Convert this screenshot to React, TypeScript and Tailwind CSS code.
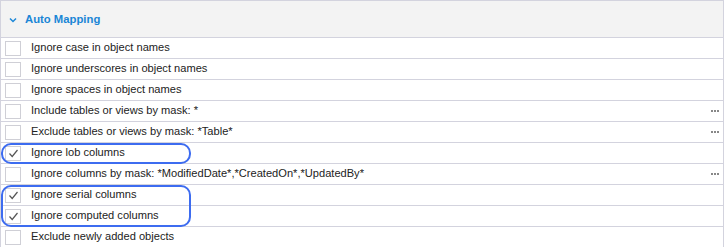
import React from "react";

type Row = { label: string; checked?: boolean; dots?: boolean };

const rows: Row[] = [
  { label: "Ignore case in object names" },
  { label: "Ignore underscores in object names" },
  { label: "Ignore spaces in object names" },
  { label: "Include tables or views by mask: *", dots: true },
  { label: "Exclude tables or views by mask: *Table*", dots: true },
  { label: "Ignore lob columns", checked: true },
  { label: "Ignore columns by mask: *ModifiedDate*,*CreatedOn*,*UpdatedBy*", dots: true },
  { label: "Ignore serial columns", checked: true },
  { label: "Ignore computed columns", checked: true },
  { label: "Exclude newly added objects" },
];

function Check() {
  return (
    <svg width="11" height="11" viewBox="0 0 11 11" className="block">
      <path d="M1.5 5.5 L4.2 8.5 L9.5 2" fill="none" stroke="#555" strokeWidth="1.2" />
    </svg>
  );
}

export default function App() {
  return (
    <div
      className="relative w-[724px] h-[247px] overflow-hidden bg-white text-[#222]"
      style={{ fontFamily: "Tahoma, 'Liberation Sans', Arial, sans-serif" }}
    >
      <div className="border border-[#d3d3de] border-b-0 h-[260px]">
        <div className="h-[37px] bg-[#f3f3f3] border-b border-[#d3d3de] flex items-center">
          <svg width="8" height="6" viewBox="0 0 8 6" className="ml-[8px] mt-[2px]">
            <path d="M1 1.5 L4 4.5 L7 1.5" fill="none" stroke="#1e88d8" strokeWidth="1.5" />
          </svg>
          <span className="ml-[8px] text-[11.3px] font-bold text-[#1a86d6]">Auto Mapping</span>
        </div>
        {rows.map((r, i) => (
          <div key={i} className="h-[21px] border-b border-[#d3d3de] flex items-center">
            <div className="ml-[4px] w-[16px] h-[15px] border border-[#cfcfd6] bg-white flex items-center justify-center">
              {r.checked && <Check />}
            </div>
            <span className="ml-[10px] text-[11.1px] leading-none whitespace-nowrap">{r.label}</span>
            <div className="flex-1" />
            {r.dots && (
              <div className="flex gap-[1px] mr-[4px]">
                <div className="w-[2px] h-[2px] bg-[#888]" />
                <div className="w-[2px] h-[2px] bg-[#888]" />
                <div className="w-[2px] h-[2px] bg-[#888]" />
              </div>
            )}
          </div>
        ))}
      </div>
      <div className="absolute left-[1px] top-[143px] w-[190px] h-[21px] border-2 border-[#3d6cf0] rounded-[10px]" />
      <div className="absolute left-[1px] top-[185px] w-[190px] h-[42px] border-2 border-[#3d6cf0] rounded-[10px]" />
    </div>
  );
}
